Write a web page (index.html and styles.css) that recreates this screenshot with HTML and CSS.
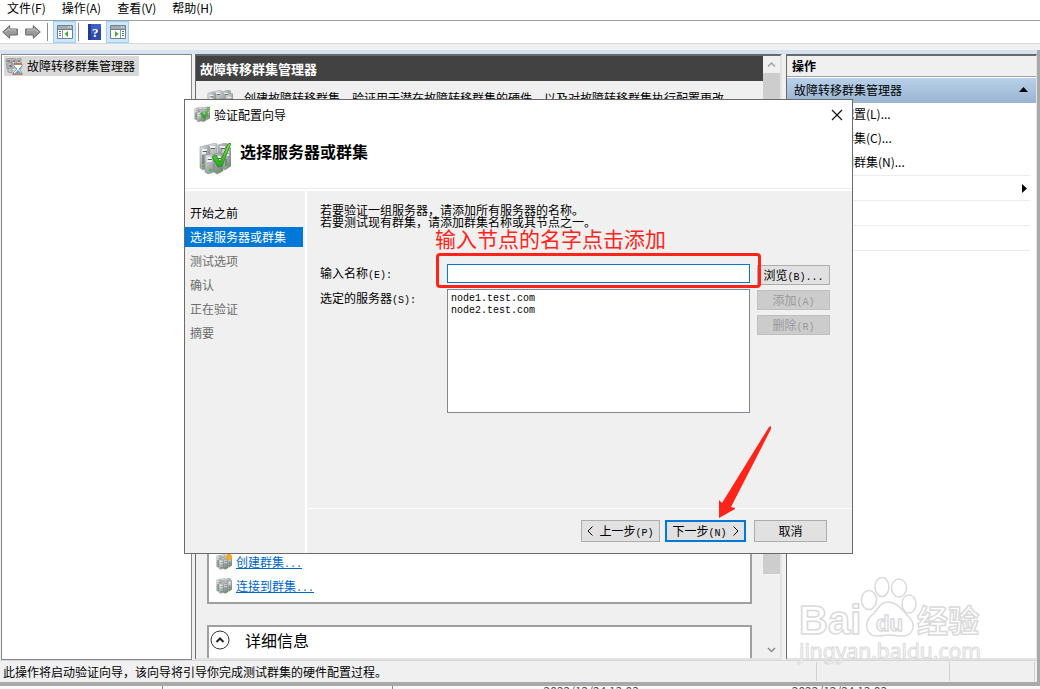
FILE: index.html
```
<!DOCTYPE html>
<html lang="zh-CN">
<head>
<meta charset="utf-8">
<title>故障转移群集管理器</title>
<link rel="stylesheet" href="styles.css">
</head>
<body>
<svg class="defs" aria-hidden="true">
  <defs>
    <linearGradient id="metal" x1="0" x2="1" y1="0" y2="1"><stop offset="0" stop-color="#e4e7e7"/><stop offset=".5" stop-color="#a3a8a9"/><stop offset="1" stop-color="#6f7577"/></linearGradient>
    <linearGradient id="leaf" x1="0" x2="0" y1="0" y2="1"><stop offset="0" stop-color="#8be04a"/><stop offset="1" stop-color="#1fa81c"/></linearGradient>
    <symbol id="servers" viewBox="0 0 32 32">
      <path d="M9 2l7-2 2 1v20l-7 3-2-2zM19 2l7-2 3 1v20l-7 3-3-2z" fill="url(#metal)" stroke="#8b9092" stroke-width=".5"/>
      <path d="M1 4l7-2 3 2v20l-7 3-3-2z" fill="url(#metal)" stroke="#888" stroke-width=".5"/>
      <path d="M23 6l6-2 3 1v18l-6 4-3-2z" fill="url(#metal)" stroke="#888" stroke-width=".5"/>
      <path d="M6 12l6-1 3 1v17l-6 2-3-2zM15 11l6-1 3 1v17l-6 3-3-2z" fill="url(#metal)" stroke="#797f81" stroke-width=".5"/>
      <path d="M3 7h5M3 10h4M11 4h5M21 4h5M8 15h5M8 18h5M17 14h5M17 17h5M26 9h4M26 12h4" stroke="#fff" stroke-width="1.3"/>
      <path d="M4 8.500h4M12 5.500h4M22 5.500h4M9 16.500h4M18 15.500h4M4 12v9M27 16v7" stroke="#5b6163"/>
      <path d="M10 27h3M19 28h3M3 23h2M27 22h3" stroke="#45c22b" stroke-width="2.2"/>
    </symbol>
    <symbol id="tick" viewBox="0 0 32 32"><path d="M13 14l4-2 4 7L29 1l3-1-9 23-4 1z" fill="url(#leaf)" stroke="#278d21" stroke-width=".9"/></symbol>
    <symbol id="pane" viewBox="0 0 16 14">
      <path d="M.5.5h15v13H.5z" fill="#fff" stroke="#777e86"/><path d="M1 1h14v3H1z" fill="#a4abb2"/><path d="M1 4.500h14" stroke="#777e86"/><path d="M11 2h1M13 2h1" stroke="#fff"/>
    </symbol>
  </defs>
</svg>

<div class="app">
  <nav class="menubar" aria-label="菜单">
    <button>文件(F)</button><button>操作(A)</button><button>查看(V)</button><button>帮助(H)</button>
  </nav>

  <div class="toolbar" role="toolbar" aria-label="工具栏">
    <button class="tool arrow" aria-label="后退"><svg width="16" height="14" viewBox="0 0 16 14"><path d="M.7 7l7-6.300v3.300h7.600v6H7.700v3.300z" fill="#9b9b9b" stroke="#666"/><path d="M3 7l4-3.500V5h7" fill="none" stroke="#c8c8c8"/></svg></button>
    <button class="tool arrow" aria-label="前进"><svg width="16" height="14" viewBox="0 0 16 14"><path d="M15.300 7l-7-6.300v3.300H.7v6h7.600v3.300z" fill="#9b9b9b" stroke="#666"/><path d="M2 5h7V3.500L13 7" fill="none" stroke="#c8c8c8"/></svg></button>
    <span class="divider"></span>
    <button class="tool on" aria-label="显示控制台树"><svg width="16" height="14"><use href="#pane"/><path d="M5.500 5v8" stroke="#999"/><path d="M2 6.500h2M2 8.500h2M2 10.500h2" stroke="#3f73b7"/><path d="M11 6v6L7.500 9z" fill="#3caf2c"/></svg></button>
    <span class="divider"></span>
    <button class="tool" aria-label="帮助"><svg width="13" height="16"><path d="M0 0h13v16H0z" fill="#3e60c4"/><path d="M0 0h3v16H0z" fill="#223c91"/><path d="M3 11l10-7v12H3z" fill="#2c4bad"/><text class="help-mark" x="4" y="13">?</text></svg></button>
    <button class="tool on" aria-label="显示操作窗格"><svg width="16" height="14"><use href="#pane"/><path d="M10.500 5v8" stroke="#999"/><path d="M12 6.500h2M12 8.500h2M12 10.500h2" stroke="#3f73b7"/><path d="M5 6v6l3.500-3z" fill="#3caf2c"/></svg></button>
  </div>

  <div class="frame">
    <div class="panes">
      <aside class="tree">
        <button class="tree-item"><svg width="18" height="17" viewBox="0 0 18 17"><path d="M1 1l5-1v10l-4 1zM7 0l4 1v9H7zM12 1l4-1v11h-4zM3 5l4-1v11l-4-1z" fill="#c3c7c8" stroke="#888" stroke-width=".7"/><path d="M2 3h3M8 3h2M13 3h2M4 8h2" stroke="#444"/><path d="M9 6h8v2l-3 3 3 4v2H8v-2l4-4-3-3z" fill="#fff" stroke="#6f9dc8"/><path d="M9 6h8M8 16h9" stroke="#bd6a35" stroke-width="1.500"/><path d="M10 15l3-3 3 3z" fill="#4aa0e0"/></svg>故障转移群集管理器</button>
      </aside>

      <main class="center">
        <div class="view">
          <h1 class="view-title">故障转移群集管理器</h1>
          <div class="scrolled">
            <div class="intro"><svg width="26" height="26" viewBox="0 0 32 32"><use href="#servers"/></svg><p>创建故障转移群集，验证用于潜在故障转移群集的硬件，以及对故障转移群集执行配置更改。</p></div>
            <section class="card links">
              <a href="#create"><svg width="16" height="16" viewBox="0 0 32 32"><use href="#servers"/><circle cx="26" cy="6" r="6" fill="#f7a723"/></svg><span>创建群集<b class="mono">...</b></span></a>
              <a href="#connect"><svg width="16" height="16" viewBox="0 0 32 32"><use href="#servers"/></svg><span>连接到群集<b class="mono">...</b></span></a>
            </section>
            <section class="card details">
              <button class="collapse" aria-label="折叠"><svg width="20" height="20"><circle cx="10" cy="10" r="9" fill="#fff" stroke="#333"/><path d="M6.500 12L10 8.500l3.500 3.500" fill="none" stroke="#222" stroke-width="2"/></svg></button>
              <h2>详细信息</h2>
            </section>
          </div>
        </div>
        <div class="scrollbar" aria-hidden="true">
          <svg width="17" height="17"><path d="M5 10.500L8.500 7l3.500 3.500" fill="none" stroke="#a0a0a0" stroke-width="1.500"/></svg>
          <span class="thumb"></span>
          <svg width="17" height="17"><path d="M5 7l3.500 3.500L12 7" fill="none" stroke="#8c8c8c" stroke-width="1.500"/></svg>
        </div>
      </main>

      <aside class="actions">
        <h2 class="actions-title">操作</h2>
        <button class="group">故障转移群集管理器<svg width="9" height="5"><path d="M0 5l4.500-5L9 5z"/></svg></button>
        <div class="action-list">
          <button>验证配置(L)...</button>
          <button>创建群集(C)...</button>
          <button>连接到群集(N)...</button>
        </div>
        <div class="row more"><svg width="5" height="9"><path d="M0 0l5 4.500L0 9z"/></svg></div>
        <div class="row"></div>
        <div class="row last"></div>
      </aside>
    </div>
    <footer class="status"><span class="message">此操作将启动验证向导，该向导将引导你完成测试群集的硬件配置过程。</span><span class="cell wide"></span><span class="cell"></span></footer>
  </div>
  <div class="behind"><span class="tick-col"></span><span class="date">2022/12/24 13:03</span><span class="date">2022/12/24 13:03</span></div>
</div>

<section class="dialog" role="dialog" aria-labelledby="dialog-title">
  <header class="titlebar">
    <svg width="16" height="17" viewBox="0 0 32 32"><use href="#servers"/><use href="#tick"/></svg>
    <span id="dialog-title">验证配置向导</span>
    <button class="close" aria-label="关闭"><svg width="12" height="12"><path d="M1 1l10 10M11 1L1 11" stroke="#111" stroke-width="1.200"/></svg></button>
  </header>
  <div class="banner"><svg width="34" height="32" viewBox="0 0 32 32"><use href="#servers"/><use href="#tick"/></svg><h2>选择服务器或群集</h2></div>
  <div class="wizard">
    <ol class="steps">
      <li class="done">开始之前</li><li class="current" aria-current="step">选择服务器或群集</li><li>测试选项</li><li>确认</li><li>正在验证</li><li>摘要</li>
    </ol>
    <form class="page">
      <div class="body">
        <p class="hint">若要验证一组服务器，请添加所有服务器的名称。<br>若要测试现有群集，请添加群集名称或其节点之一。</p>
        <div class="fields">
          <label for="server-name">输入名称<b class="mono">(E):</b></label>
          <input id="server-name" type="text">
          <label for="selected">选定的服务器<b class="mono">(S):</b></label>
          <select id="selected" size="8"><option>node1.test.com</option><option>node2.test.com</option></select>
          <div class="side">
            <button type="button" class="btn"><span>浏览<b class="mono">(B)...</b></span></button>
            <button type="button" class="btn" disabled><span>添加<b class="mono">(A)</b></span></button>
            <button type="button" class="btn" disabled><span>删除<b class="mono">(R)</b></span></button>
          </div>
        </div>
      </div>
      <div class="buttons">
        <button type="button" class="btn back"><svg width="6" height="10"><path d="M5.500.5L1 5l4.500 4.500" fill="none" stroke="#000"/></svg><span>上一步<b class="mono">(P)</b></span></button>
        <button type="button" class="btn next"><span>下一步<b class="mono">(N)</b></span><svg width="6" height="10"><path d="M.5.5L5 5 .5 9.500" fill="none" stroke="#000"/></svg></button>
        <button type="button" class="btn cancel">取消</button>
      </div>
    </form>
  </div>
  <div class="note">输入节点的名字点击添加</div>
  <div class="mark"></div>
  <svg class="pointer" width="54" height="94" viewBox="0 0 54 94"><path d="M51 2l2-1v3L13 82l4 1v1L1 93V75l3 3z" fill="#ff2419"/></svg>
</section>

<svg class="watermark" width="192" height="92" viewBox="0 0 192 92">
  <g fill="#fff" stroke="#dadada" stroke-width="1.500">
    <text x="3" y="57" class="wm-bai">Bai</text>
    <ellipse cx="73" cy="23" rx="7.500" ry="9.500"/><ellipse cx="86" cy="10" rx="7" ry="9.500"/><ellipse cx="103" cy="11" rx="7.500" ry="9"/><ellipse cx="113" cy="27" rx="7" ry="9"/>
    <path d="M92 25c-8 0-10 8-17 14-7 7-6 20 7 20 4 0 7-1 11-1s8 1 13 1c12 0 14-12 7-19-7-7-12-15-21-15z"/>
    <text x="80" y="54" class="wm-du">du</text>
    <text x="121" y="55" class="wm-cn">经验</text>
    <text x="3" y="82" class="wm-url">jingyan.baidu.com</text>
  </g>
</svg>
</body>
</html>
```
FILE: styles.css
```
* { box-sizing: border-box; }
body { margin: 0; height: 100vh; overflow: hidden; position: relative; color: #000; font: 12px/16px "Noto Sans CJK SC", sans-serif; }
button { font: inherit; color: inherit; background: none; border: 0; padding: 0; margin: 0; }
h1, h2, p, ol { margin: 0; padding: 0; }
svg { display: block; flex: none; }
.defs { position: absolute; width: 0; height: 0; }
.mono { font: 10px/12px "Liberation Mono", monospace; }

.app { height: 100vh; display: flex; flex-direction: column; background: #f0f0f0; }
.menubar { height: 21px; display: flex; gap: 16px; padding: 0 7px 4px; background: #fff; border-bottom: 1px solid #a0a0a0; }
.toolbar { height: 23px; display: flex; align-items: center; background: #fff; padding-left: 2px; border-bottom: 1px solid #d7d7d7; }
.tool { width: 23px; height: 22px; display: flex; align-items: center; justify-content: center; }
.tool.arrow { justify-content: flex-start; }
.tool.on { background: #cce8ff; border: 1px solid #99d1ff; }
.divider { width: 1px; height: 18px; background: #8c8c8c; margin: 0 5px 0 0; }
.tool.arrow + .divider { margin-left: -1px; }
.tool.on + .divider { margin: 0 4px 0 2px; }
.help-mark { font: bold 13px "Liberation Serif", serif; fill: #fff; }

.frame { flex: 1; min-height: 0; display: flex; flex-direction: column; margin-top: 6px; border-right: 3px solid #a9a9a9; border-bottom: 4px solid #a9a9a9; }
.panes { flex: 1; min-height: 0; display: flex; gap: 3px; border-top: 4px solid #d6e2f0; padding-left: 1px; }
.tree { width: 191px; background: #fff; border: 1px solid #828790; padding: 1px 2px; }
.tree-item { display: flex; align-items: center; gap: 4px; height: 20px; padding: 0 4px 0 1px; background: #d9d9d9; }
.center { flex: 1; min-width: 0; display: flex; border: 2px solid #696969; border-width: 2px 2px 2px 1px; border-right-color: #e3e3e3; border-bottom-color: #e3e3e3; }
.view { flex: 1; min-width: 0; display: flex; flex-direction: column; }
.view-title { height: 25px; background: #424242; color: #fff; font-size: 13px; line-height: 25px; padding-left: 4px; }
.scrolled { flex: 1; min-height: 0; display: flex; flex-direction: column; padding: 9px 11px 0; }
.intro { display: flex; gap: 11px; }
.intro p { white-space: nowrap; }
.card { background: #fff; border: 2px solid #a0a0a0; }
.links { flex: 1; margin-top: 10px; margin-bottom: 21px; padding: 0 7px 4px; display: flex; flex-direction: column; justify-content: flex-end; }
.links a { display: flex; align-items: center; gap: 4px; height: 24px; color: #0066cc; }
.details { height: 33px; border-bottom: 0; display: flex; align-items: center; gap: 15px; padding: 0 0 5px 1px; }
.details h2 { font-size: 16px; font-weight: normal; }
.scrollbar { width: 17px; display: flex; flex-direction: column; }
.thumb { flex: 1; background: #cdcdcd; margin-bottom: 67px; }
.actions { width: 251px; margin-left: 1px; background: #fff; border-top: 2px solid #696969; border-left: 1px solid #696969; border-right: 1px solid #e3e3e3; border-bottom: 2px solid #e3e3e3; }
.actions-title { height: 21px; background: #f0f0f0; border-bottom: 1px solid #a0a0a0; font-size: 12px; line-height: 20px; padding-left: 5px; margin-bottom: 1px; }
.group { width: 100%; height: 25px; display: flex; align-items: center; justify-content: space-between; padding: 0 8px 2px 7px; background: linear-gradient(#b9d1ea, #99b4d1); }
.action-list { display: flex; flex-direction: column; align-items: flex-start; padding-left: 31px; height: 72px; }
.action-list button { height: 24px; padding-bottom: 2px; }
.row { height: 25px; margin-right: 6px; border-top: 1px solid #ececec; }
.row.more { display: flex; align-items: center; justify-content: flex-end; padding-right: 3px; }
.row.last { border-bottom: 1px solid #ececec; height: 26px; }
.status { height: 22px; display: flex; align-items: stretch; border-top: 1px solid #d7d7d7; padding: 1px 2px 1px 3px; line-height: 19px; }
.message { flex: 1; }
.cell { width: 86px; border-left: 1px solid #d0d0d0; border-right: 1px solid #d0d0d0; }
.cell.wide { width: 133px; border-right: 0; }
.behind { height: 3px; overflow: hidden; background: #fafafa; padding-left: 162px; display: flex; line-height: 10px; color: #555; }
.tick-col { width: 235px; margin-right: 151px; border-left: 1px solid #888; border-right: 1px solid #888; }
.date { width: 253px; }

.dialog { position: absolute; left: 184px; top: 99px; width: 669px; height: 455px; display: flex; flex-direction: column; background: #f0f0f0; border: 1px solid #6a6a6a; }
.titlebar { height: 29px; display: flex; align-items: center; gap: 4px; padding: 0 9px; background: #fff; }
.close { margin-left: auto; }
.banner { height: 60px; display: flex; gap: 8px; padding: 14px 13px 0; background: #fff; border-bottom: 1px solid #ececec; }
.banner h2 { font-size: 16px; line-height: 17px; }
.wizard { flex: 1; min-height: 0; display: flex; border-top: 2px solid #fff; }
.steps { width: 122px; list-style: none; padding: 12px 2px 0 0; border-right: 2px solid #fff; display: flex; flex-direction: column; gap: 4px; color: #6d6d6d; }
.steps li { height: 20px; line-height: 20px; padding-left: 5px; }
.steps .done { color: #000; }
.steps .current { background: #0078d7; color: #fff; }
.page { flex: 1; display: flex; flex-direction: column; }
.body { flex: 1; padding: 13px 15px 0 13px; }
.hint { line-height: 12px; white-space: nowrap; }
.fields { display: grid; grid-template-columns: 127px 1fr 87px; grid-template-rows: 19px 124px; row-gap: 6px; margin-top: 36px; }
.fields label { line-height: 17px; }
.fields input { width: 100%; border: 1px solid #0078d7; background: #fff; padding: 0 2px; outline: 0; }
.fields select { width: 100%; height: 100%; border: 1px solid #828790; border-radius: 0; background: #fff; padding: 3px 3px; font: 10px/12px "Liberation Mono", monospace; color: #000; overflow: hidden; outline: 0; }
.fields option { padding: 0; min-height: 12px; }
.side { grid-column: 3; grid-row: 1 / 3; display: flex; flex-direction: column; gap: 5px; margin-left: 7px; width: 73px; padding-top: 1px; }
.btn { height: 20px; display: flex; align-items: center; justify-content: center; background: #e1e1e1; border: 1px solid #adadad; white-space: nowrap; }
.btn:disabled { background: #ccc; border-color: #bfbfbf; color: #9a9a9a; }
.buttons { height: 45px; display: flex; padding: 11px 25px 0 0; justify-content: flex-end; border-top: 1px solid #fff; }
.buttons .btn { height: 22px; }
.back { width: 79px; margin-right: 5px; }
.back svg { margin-right: 6px; }
.next { width: 81px; margin-right: 8px; border: 2px solid #0078d7; }
.next svg { margin-left: 6px; }
.cancel { width: 73px; }
.note { position: absolute; left: 250px; top: 125px; font-size: 21px; line-height: 26px; color: #ff2419; white-space: nowrap; }
.mark { position: absolute; left: 251px; top: 153px; width: 325px; height: 35px; border: 3px solid #ff2419; border-radius: 4px; pointer-events: none; }
.pointer { position: absolute; left: 533px; top: 325px; pointer-events: none; }
.watermark { position: absolute; right: 52px; bottom: 20px; pointer-events: none; }
.wm-bai { font: bold 40px "Liberation Sans", sans-serif; }
.wm-du { font: bold 22px "Liberation Sans", sans-serif; }
.wm-cn { font: bold 31px "Noto Sans CJK SC", sans-serif; }
.wm-url { font: 21px "Noto Sans", sans-serif; stroke-width: 1px; }
```
